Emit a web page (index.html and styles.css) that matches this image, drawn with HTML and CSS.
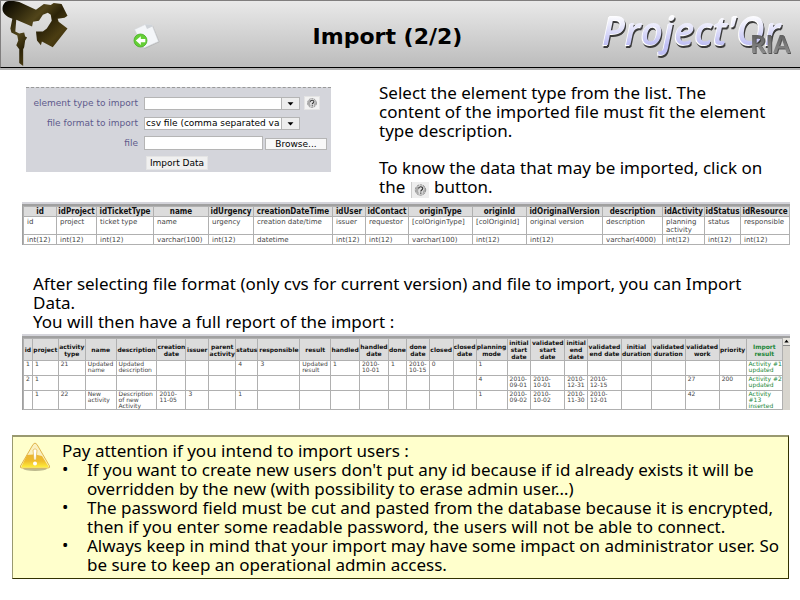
FILE: index.html
```html
<!DOCTYPE html>
<html lang="en">
<head>
<meta charset="utf-8">
<title>Import (2/2)</title>
<link rel="stylesheet" href="styles.css">
</head>
<body>
<svg class="defs" aria-hidden="true">
  <symbol id="help" viewBox="0 0 14 14">
    <circle cx="7" cy="7" r="5.2" fill="#dedede" stroke="#8a8a8a" stroke-width="1" stroke-dasharray="2.5 .8"/>
    <path d="M2.500 5l2-2 1 2-1 3 1 2.500-1.500.5-2-3zM9 2l2.500 2.500V9L9 11.500 9.500 8 11 6z" fill="#aaa"/>
    <path d="M5.200 5.600c0-2.400 4-2.400 4-.2C9.200 7 7.300 7 7.300 8.500M7.300 9.500v1.300" fill="none" stroke="#333" stroke-width="1.200"/>
  </symbol>
</svg>
<header class="top">
  <svg class="emblem" viewBox="0 0 68 67" aria-hidden="true">
    <defs>
      <linearGradient id="bronze" x1="0" y1="0" x2="1" y2="1">
        <stop offset="0" stop-color="#000"/><stop offset=".13" stop-color="#1d1806"/><stop offset=".38" stop-color="#51451a"/>
        <stop offset=".52" stop-color="#2c2308"/><stop offset=".68" stop-color="#4b3d12"/><stop offset="1" stop-color="#241a04"/>
      </linearGradient>
    </defs>
    <path fill="url(#bronze)" d="M4 1C8-1 14 0 18 1L35 9 43 3 50 4 53 2 61 3 67 15 64 17 57 18 58 21 67 28 52 47 41 41 40 45 36 40 35 31 42 31 46 28 51 20 50 14 47 12 42 14 38 20 32 21 31 26 15 19 14 31 18 33 23 32 24 36 26 37 24 40 23 47 22 49 22 66 18 63 18 49 15 45 17 40 16 35 10 32 9 28 11 18C6 16 1 13 1 8 1 5 2 3 4 1Z"/>
  </svg>
  <svg class="page-icon" viewBox="0 0 28 28" aria-hidden="true">
    <path d="M2.500 7.500L12 2l8 1 6.500 16-15 7z" fill="#999" opacity=".5"/>
    <path d="M1.500 6.500L12 1.500l7 .5 6.500 16.500L11 25z" fill="#f4f6f9" stroke="#d4d7dc" stroke-width=".6"/>
    <path d="M12 1.500l2 4.500 5.500-2.500-.5-1.500z" fill="#cfd3d8"/>
    <circle cx="7.500" cy="17.500" r="6.500" fill="#64cf35" stroke="#46ad25" stroke-width=".8"/>
    <path d="M2.800 17.500l5-4.300v2.700h4.500v3.400H7.800V22z" fill="#fff"/>
  </svg>
  <h1>Import (2/2)</h1>
  <div class="brand"><span class="brand-name">Project'Or</span><span class="brand-tag">RIA</span></div>
</header>

<main>
  <section class="intro">
    <form class="import-form">
      <label for="type">element type to import</label>
      <div class="field">
        <span class="combo"><select id="type"><option></option></select><svg viewBox="0 0 19 13" aria-hidden="true"><path d="M6 5h7l-3.500 4z"/></svg></span>
        <button type="button" class="help" aria-label="Help"><svg><use href="#help"/></svg></button>
      </div>
      <label for="format">file format to import</label>
      <div class="field">
        <span class="combo"><select id="format"><option>csv file (comma separated values)</option></select><svg viewBox="0 0 19 13" aria-hidden="true"><path d="M6 5h7l-3.500 4z"/></svg></span>
      </div>
      <label for="file">file</label>
      <div class="field"><input id="file" type="text"><button type="button" class="browse">Browse...</button></div>
      <span></span>
      <div class="field"><button type="button" class="submit">Import Data</button></div>
    </form>
    <div class="intro-text">
      <p>Select the element type from the list. The<br>content of the imported file must fit the element type description.</p>
      <p>To know the data that may be imported, click on<br>the <svg class="inline-help" aria-hidden="true"><use href="#help"/></svg> button.</p>
    </div>
  </section>

  <div class="frame fields-frame">
  <table class="fields">
    <colgroup><col class="w33"><col class="w40"><col class="w57"><col class="w55"><col class="w45"><col class="w79"><col class="w33"><col class="w43"><col class="w64"><col class="w54"><col class="w76"><col class="w60"><col class="w42"><col class="w36"><col class="w49"></colgroup>
    <thead><tr><th>id</th><th>idProject</th><th>idTicketType</th><th>name</th><th>idUrgency</th><th>creationDateTime</th><th>idUser</th><th>idContact</th><th>originType</th><th>originId</th><th>idOriginalVersion</th><th>description</th><th>idActivity</th><th>idStatus</th><th>idResource</th></tr></thead>
    <tbody>
      <tr class="names"><td>id</td><td>project</td><td>ticket type</td><td>name</td><td>urgency</td><td>creation date/time</td><td>issuer</td><td>requestor</td><td>[colOriginType]</td><td>[colOriginId]</td><td>original version</td><td>description</td><td class="wrap">planning activity</td><td>status</td><td>responsible</td></tr>
      <tr><td>int(12)</td><td>int(12)</td><td>int(12)</td><td>varchar(100)</td><td>int(12)</td><td>datetime</td><td>int(12)</td><td>int(12)</td><td>varchar(100)</td><td>int(12)</td><td>int(12)</td><td>varchar(4000)</td><td>int(12)</td><td>int(12)</td><td>int(12)</td></tr>
    </tbody>
  </table>
  </div>

  <p class="after">After selecting file format (only cvs for current version) and file to import, you can Import<br>Data.<br>You will then have a full report of the import :</p>

  <div class="frame report-frame">
    <table class="report">
      <colgroup><col class="w9"><col class="w26"><col class="w27"><col class="w31"><col class="w41"><col class="w29"><col class="w23"><col class="w27"><col class="w22"><col class="w42"><col class="w31"><col class="w29"><col class="w29"><col class="w18"><col class="w23"><col class="w24"><col class="w23"><col class="w31"><col class="w24"><col class="w34"><col class="w23"><col class="w34"><col class="w30"><col class="w34"><col class="w34"><col class="w27"><col class="w34"></colgroup>
      <thead><tr><th>id</th><th>project</th><th>activity<br>type</th><th>name</th><th>description</th><th>creation<br>date</th><th>issuer</th><th>parent<br>activity</th><th>status</th><th>responsible</th><th>result</th><th>handled</th><th>handled<br>date</th><th>done</th><th>done<br>date</th><th>closed</th><th>closed<br>date</th><th>planning<br>mode</th><th>initial<br>start<br>date</th><th>validated<br>start<br>date</th><th>initial<br>end<br>date</th><th>validated<br>end date</th><th>initial<br>duration</th><th>validated<br>duration</th><th>validated<br>work</th><th>priority</th><th class="ok">Import<br>result</th></tr></thead>
      <tbody>
        <tr><td>1</td><td>1</td><td>21</td><td>Updated<br>name</td><td>Updated<br>description</td><td></td><td></td><td></td><td>4</td><td>3</td><td>Updated<br>result</td><td>1</td><td>2010-<br>10-01</td><td>1</td><td>2010-<br>10-15</td><td>0</td><td></td><td>1</td><td></td><td></td><td></td><td></td><td></td><td></td><td></td><td></td><td class="ok">Activity #1<br>updated</td></tr>
        <tr><td>2</td><td>1</td><td></td><td></td><td></td><td></td><td></td><td></td><td></td><td></td><td></td><td></td><td></td><td></td><td></td><td></td><td></td><td>4</td><td>2010-<br>09-01</td><td>2010-<br>10-01</td><td>2010-<br>12-31</td><td>2010-<br>12-15</td><td></td><td></td><td>27</td><td>200</td><td class="ok">Activity #2<br>updated</td></tr>
        <tr><td></td><td>1</td><td>22</td><td>New<br>activity</td><td>Description<br>of new<br>Activity</td><td>2010-<br>11-05</td><td>3</td><td></td><td>1</td><td></td><td></td><td></td><td></td><td></td><td></td><td></td><td></td><td>1</td><td>2010-<br>09-02</td><td>2010-<br>10-02</td><td>2010-<br>11-30</td><td>2010-<br>12-01</td><td></td><td></td><td>42</td><td></td><td class="ok">Activity<br>#13<br>inserted</td></tr>
      </tbody>
    </table>
    <div class="scroll"><svg viewBox="0 0 7 8" aria-hidden="true"><path d="M1 5h5L3.500 2z"/></svg></div>
  </div>

  <section class="warning">
    <svg class="warn-icon" viewBox="0 0 32 30" aria-hidden="true">
      <defs><linearGradient id="amber" x1="0" y1="0" x2="0" y2="1"><stop offset="0" stop-color="#eab536"/><stop offset=".5" stop-color="#f0bd2c"/><stop offset="1" stop-color="#fff03c"/></linearGradient></defs>
      <ellipse cx="16" cy="26.500" rx="12" ry="2.500" fill="#bdb98d"/>
      <path d="M14 2.500q2-3 4 0L30.500 24q.8 2-1.500 2H3q-2.300 0-1.500-2z" fill="#faf0c0" stroke="#dfb44c"/>
      <path d="M8 13q8-1.500 15 1l6.500 10.500q.3 1-1 1H3.500q-1.300 0-1-1z" fill="url(#amber)"/>
      <path d="M14 8q2-2.500 4 0l-1 10h-2z" fill="#fff" stroke="#e3b33c" stroke-width=".7"/>
      <circle cx="16" cy="21.500" r="2" fill="#fff"/>
    </svg>
    <div>
      <p>Pay attention if you intend to import users :</p>
      <ul>
        <li>If you want to create new users don't put any id because if id already exists it will be<br>overridden by the new (with possibility to erase admin user…)</li>
        <li>The password field must be cut and pasted from the database because it is encrypted,<br>then if you enter some readable password, the users will not be able to connect.</li>
        <li>Always keep in mind that your import may have some impact on administrator user. So<br>be sure to keep an operational admin access.</li>
      </ul>
    </div>
  </section>
</main>
</body>
</html>
```

FILE: styles.css
```css
* { box-sizing: border-box; }
body { margin: 0; background: #fff; color: #000; font: 17px/19px "Noto Sans", sans-serif; }
p, ul, h1 { margin: 0; padding: 0; }
.defs { position: absolute; width: 0; height: 0; }

.top {
  display: grid; grid-template-columns: 134px 1fr 198px; align-items: center; position: relative;
  height: 68px; border-top: 1px solid #807e7e; border-left: 1px solid #807e7e; border-bottom: 1px solid #000;
  background: linear-gradient(#e9e9e9, #bcbcbc); box-shadow: 0 2px 0 #b5b5b5;
}
.emblem { width: 68px; height: 66px; display: block; }
.page-icon { position: absolute; left: 132px; top: 22px; width: 28px; height: 28px; }
h1 { grid-column: 2; padding: 6px 0 0 38px; text-align: center; font: bold 22px/24px "DejaVu Sans", sans-serif; white-space: nowrap; }
.brand { position: relative; height: 66px; }
.brand-name {
  display: block; font: italic 600 39px/58px "Open Sans", sans-serif; white-space: nowrap;
  background: linear-gradient(#fff 25%, #c0c0f4 75%); -webkit-background-clip: text; background-clip: text; color: transparent;
  filter: drop-shadow(-1px 1px 0 #fff) drop-shadow(1px 2px 0 #3a3a3a);
}
.brand-tag {
  position: absolute; right: 10px; bottom: 9px; font: 900 24px/28px Lato, sans-serif;
  background: linear-gradient(#555, #999); -webkit-background-clip: text; background-clip: text; color: transparent;
  filter: drop-shadow(1px 1px 0 #555);
}

main { padding: 15px 10px 0 12px; }
.intro { display: grid; grid-template-columns: 305px 1fr; column-gap: 48px; padding: 0 14px; align-items: start; }
.import-form {
  display: grid; grid-template-columns: 112px 1fr; column-gap: 6px; row-gap: 6px; align-items: center;
  margin-top: 4px; padding: 8px 4px 2px 0; background: #d4d5db; border-top: 1px dashed #999;
  font: 9px/12px "DejaVu Sans", sans-serif;
}
.import-form label { text-align: right; color: #5e5a8c; white-space: nowrap; }
.field { display: flex; align-items: center; height: 14px; }
.import-form input, .import-form select, .import-form button { font: inherit; color: #000; margin: 0; padding: 0; border: 1px solid #b5b5b5; border-radius: 0; }
.combo { position: relative; width: 156px; height: 13px; }
.combo select { appearance: none; display: block; width: 100%; height: 13px; padding: 0 19px 0 1px; background: #fff; line-height: 11px; }
.combo svg { position: absolute; right: 0; top: 0; width: 19px; height: 13px; background: #eee; border: 1px solid #b5b5b5; pointer-events: none; }
.import-form .help { width: 16px; height: 14px; margin-left: 4px; background: #f3f3f3; border-color: #e4e4e4; }
.help svg { display: block; width: 14px; height: 12px; }
.import-form input { width: 119px; height: 14px; background: #fff; }
.import-form .browse { width: 62px; height: 12px; margin-left: 2px; line-height: 10px; background: #f8f8f8; align-self: flex-end; }
.import-form .submit { width: 62px; height: 14px; margin-left: 2px; background: #f0f0f0; border-color: #e4e4e4; }
.intro-text p + p { margin-top: 18px; }
.inline-help { width: 18px; height: 16px; margin: 0 1px; padding: 1px; vertical-align: -5px; background: #eee; border-left: 1px solid #ccc; }

.frame { border-top: 2px solid #a0a0a0; box-shadow: 0 -2px 0 #d4d4da; margin-left: 10px; }
table { width: 100%; border-collapse: collapse; table-layout: fixed; font-family: "DejaVu Sans", sans-serif; }
th, td { border: 1px solid #b0b0b0; padding: 0; white-space: nowrap; }
th { background: #dcdcdc; color: #101010; }
td { color: #444; text-align: left; vertical-align: top; }
.fields-frame { margin-top: 6px; border-left: 1px solid #a0a0a0; }
.fields { font-size: 7px; line-height: 8px; }
.fields th { font-size: 8px; line-height: 9px; font-family: "DejaVu Sans Condensed", "DejaVu Sans", sans-serif; }
.fields td { padding: 1px 0 0 3px; }
.fields .names td { height: 18px; }
.fields .wrap { white-space: normal; }
.after { margin: 29px 20px 0 21px; }
.report-frame { margin-top: 5px; display: flex; border-left: 1px solid #a0a0a0; }
.report { font-size: 6px; line-height: 7px; flex: 1; width: auto; min-width: 0; }
.report td { padding: 0 0 0 2px; height: 15px; }
.report tbody { line-height: 6px; }
.ok, th.ok { color: #23873a; }
.scroll { width: 7px; background: #d8d5ce; flex: none; }
.scroll svg { display: block; width: 7px; height: 8px; background: #e8e6e0; border-bottom: 1px solid #888; }

.warning { display: grid; grid-template-columns: 32px 1fr; column-gap: 11px; margin: 25px 1px 0 0; padding: 4px 6px; background: #ffc; border: 1px solid #333300; border-top: 2px solid #999970; border-left-color: #999970; }
.warn-icon { width: 32px; height: 30px; margin-top: 1px; }
ul { list-style: none; }
li { position: relative; padding-left: 25px; }
li::before { content: "•"; position: absolute; left: 0; top: -1px; }

.w9 { width: 9px; } .w18 { width: 18px; } .w22 { width: 22px; } .w23 { width: 23px; } .w24 { width: 24px; }
.w26 { width: 26px; } .w27 { width: 27px; } .w29 { width: 29px; } .w30 { width: 30px; } .w31 { width: 31px; }
.w33 { width: 33px; } .w34 { width: 34px; } .w36 { width: 36px; } .w40 { width: 40px; } .w41 { width: 41px; }
.w42 { width: 42px; } .w43 { width: 43px; } .w45 { width: 45px; } .w49 { width: 49px; } .w54 { width: 54px; }
.w55 { width: 55px; } .w57 { width: 57px; } .w60 { width: 60px; } .w64 { width: 64px; } .w76 { width: 76px; } .w79 { width: 79px; }
```
